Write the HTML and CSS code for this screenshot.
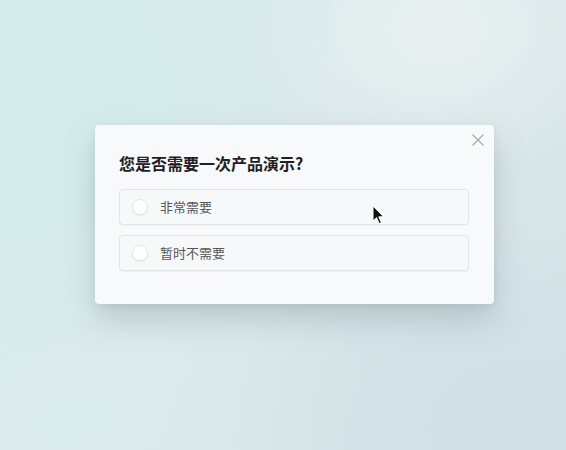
FILE: index.html
```html
<!DOCTYPE html>
<html lang="zh-CN">
<head>
    <meta charset="UTF-8">
    <meta name="viewport" content="width=device-width, initial-scale=1.0">
    <title>产品演示</title>
    <link rel="stylesheet" href="styles.css">
</head>
<body>
    <div class="dialog">
        <button class="close" aria-label="关闭">
            <svg width="12" height="12" viewBox="0 0 12 12"><path d="M1 1L11 11M11 1L1 11" stroke="#a9abad" stroke-width="1.3" stroke-linecap="round"/></svg>
        </button>
        <h2 class="title">您是否需要一次产品演示?</h2>
        <div class="options">
            <label class="option">
                <span class="radio"></span>
                <span class="label">非常需要</span>
            </label>
            <label class="option">
                <span class="radio"></span>
                <span class="label">暂时不需要</span>
            </label>
        </div>
        <svg class="cursor" width="14" height="20" viewBox="0 0 14 20"><path d="M1 1V16L4.6 12.6L7.2 18.6L9.4 17.6L6.8 11.8H11.6Z" fill="#111" stroke="#fff" stroke-width="1" stroke-linejoin="round"/></svg>
    </div>
</body>
</html>
```

FILE: styles.css
```css
html, body {
    margin: 0;
    height: 100%;
}
body {
    font-family: "Noto Sans CJK SC", "Noto Sans", sans-serif;
    background-color: #d9e9eb;
    background-image:
        radial-gradient(ellipse 200px 150px at 440px 30px, rgba(236, 242, 241, 0.8), rgba(236, 242, 241, 0)),
        radial-gradient(ellipse 260px 220px at 40px 120px, rgba(212, 236, 236, 0.9), rgba(212, 236, 236, 0)),
        radial-gradient(ellipse 300px 200px at 520px 420px, rgba(206, 222, 228, 0.9), rgba(206, 222, 228, 0)),
        radial-gradient(ellipse 300px 200px at 80px 420px, rgba(220, 237, 238, 0.9), rgba(220, 237, 238, 0)),
        linear-gradient(135deg, #d6ecec, #dbe8eb 50%, #d4e2e6);
    overflow: hidden;
}
.dialog {
    position: relative;
    box-sizing: border-box;
    width: 399px;
    height: 179px;
    margin: 125px 0 0 95px;
    padding: 26px 25px 0 24px;
    background: #f8f9fa;
    border-radius: 4px;
    box-shadow: 0 16px 30px rgba(120, 140, 148, 0.35), 0 2px 6px rgba(120, 140, 148, 0.15);
}
.close {
    position: absolute;
    top: 6px;
    right: 7px;
    width: 18px;
    height: 18px;
    padding: 0;
    border: none;
    background: none;
    display: flex;
    align-items: center;
    justify-content: center;
}
.title {
    margin: 0 0 14px;
    font-size: 16px;
    font-weight: 700;
    line-height: 24px;
    color: #1f2021;
}
.options {
    display: flex;
    flex-direction: column;
    gap: 10px;
}
.option {
    display: flex;
    align-items: center;
    height: 36px;
    box-sizing: border-box;
    padding-left: 12px;
    border: 1px solid #e3e5e7;
    border-radius: 4px;
    background: #f7f8f9;
    box-shadow: 0 1px 1px rgba(0, 0, 0, 0.04);
}
.radio {
    width: 16px;
    height: 16px;
    box-sizing: border-box;
    border-radius: 50%;
    border: 1px solid #e6e7e8;
    background: #fff;
    box-shadow: 0 1px 2px rgba(0, 0, 0, 0.06);
    margin-right: 12px;
}
.label {
    font-size: 13px;
    line-height: 18px;
    color: #555758;
}
.cursor {
    position: absolute;
    left: 277px;
    top: 80px;
}
```
